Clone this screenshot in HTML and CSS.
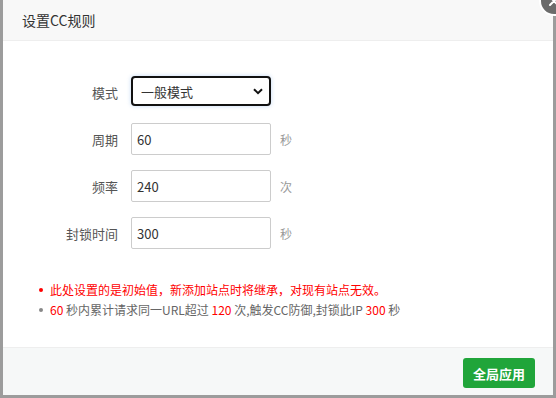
FILE: index.html
```html
<!DOCTYPE html>
<html lang="zh-CN">
<head>
  <meta charset="UTF-8">
  <title>设置CC规则</title>
  <link rel="stylesheet" href="styles.css">
</head>
<body>
  <div class="layer">
    <div class="layer-title">设置CC规则</div>
    <a class="layer-close" href="#">
      <svg width="10" height="10" viewBox="0 0 10 10"><path d="M1 1L9 9M9 1L1 9" stroke="#fff" stroke-width="2" stroke-linecap="round"/></svg>
    </a>

    <div class="layer-content">
      <div class="form">
        <div class="line">
          <span class="tname">模式</span>
          <div class="select-box">
            <select class="bt-select">
              <option>一般模式</option>
              <option>增强模式</option>
            </select>
            <svg class="select-arrow" width="10" height="7" viewBox="0 0 10 7"><path d="M1 1.2L5 5.2L9 1.2" fill="none" stroke="#111" stroke-width="2"/></svg>
          </div>
        </div>
        <div class="line">
          <span class="tname">周期</span>
          <input class="bt-input" type="text" value="60">
          <span class="unit">秒</span>
        </div>
        <div class="line">
          <span class="tname">频率</span>
          <input class="bt-input" type="text" value="240">
          <span class="unit">次</span>
        </div>
        <div class="line">
          <span class="tname">封锁时间</span>
          <input class="bt-input" type="text" value="300">
          <span class="unit">秒</span>
        </div>
      </div>

      <ul class="help">
        <li class="red">此处设置的是初始值，新添加站点时将继承，对现有站点无效。</li>
        <li><span class="red">60</span> 秒内累计请求同一URL超过 <span class="red">120</span> 次,触发CC防御,封锁此IP <span class="red">300</span> 秒</li>
      </ul>
    </div>

    <div class="layer-btn">
      <button class="btn-success">全局应用</button>
    </div>
  </div>
</body>
</html>
```

FILE: styles.css
```css
/* CC rule dialog */
body {
  margin: 0;
  background-color: #9c9c9c;
  font-family: "Microsoft YaHei", "Noto Sans CJK SC", sans-serif;
  height: 398px;
  overflow: hidden;
}

.layer {
  position: relative;
  margin-left: 3px;
  width: 550px;
  height: 395px;
  background-color: #fff;
  display: flex;
  flex-direction: column;
}

.layer-title {
  height: 40px;
  line-height: 40px;
  padding-left: 19px;
  font-size: 14px;
  color: #333;
  background-color: #f8f8f8;
  border-bottom: 1px solid #eee;
}

.layer-close {
  position: absolute;
  left: 536px;
  top: -14px;
  width: 26px;
  height: 26px;
  border: 2px solid #fff;
  border-radius: 50%;
  background-color: #6b6b6b;
  display: flex;
  align-items: center;
  justify-content: center;
}

.layer-content {
  flex: 1;
  padding-top: 35px;
}

.form {
  display: flex;
  flex-direction: column;
  gap: 15px;
}

.line {
  display: flex;
  align-items: center;
  height: 32px;
}

.tname {
  width: 100px;
  padding-left: 15px;
  margin-right: 13px;
  text-align: right;
  font-size: 13px;
  color: #555;
}

.select-box {
  position: relative;
  margin-top: -2px;
}

.bt-select {
  appearance: none;
  -webkit-appearance: none;
  width: 140px;
  height: 30px;
  padding: 0 8px;
  border: 2px solid #111;
  border-radius: 4px;
  background-color: #fff;
  box-shadow: 0 0 4px rgba(120, 170, 230, 0.45);
  font-family: inherit;
  font-size: 13px;
  color: #333;
  outline: none;
}

.select-arrow {
  position: absolute;
  right: 8px;
  top: 12px;
}

.bt-input {
  box-sizing: border-box;
  width: 140px;
  height: 32px;
  padding: 0 5px;
  border: 1px solid #ccc;
  border-radius: 2px;
  font-family: inherit;
  font-size: 13px;
  color: #333;
  outline: none;
}

.unit {
  margin-left: 9px;
  font-size: 12px;
  color: #999;
}

.help {
  list-style: none;
  margin: 31px 0 0;
  padding: 0 0 0 47px;
  font-size: 12px;
  line-height: 20px;
  color: #666;
}

.help li {
  position: relative;
}

.help li::before {
  content: "";
  position: absolute;
  left: -11px;
  top: 8px;
  width: 4px;
  height: 4px;
  border-radius: 50%;
  background-color: #888;
}

.help li.red::before {
  background-color: #f00;
}

.red {
  color: #f00;
}

.layer-btn {
  height: 48px;
  border-top: 1px solid #eee;
  background-color: #f6f8f8;
  display: flex;
  justify-content: flex-end;
  align-items: flex-start;
  padding: 10px 18px 0 0;
  box-sizing: border-box;
}

.btn-success {
  width: 72px;
  height: 30px;
  border: none;
  border-radius: 3px;
  background-color: #20a53a;
  color: #fff;
  font-family: inherit;
  font-size: 13px;
  font-weight: bold;
}
```
